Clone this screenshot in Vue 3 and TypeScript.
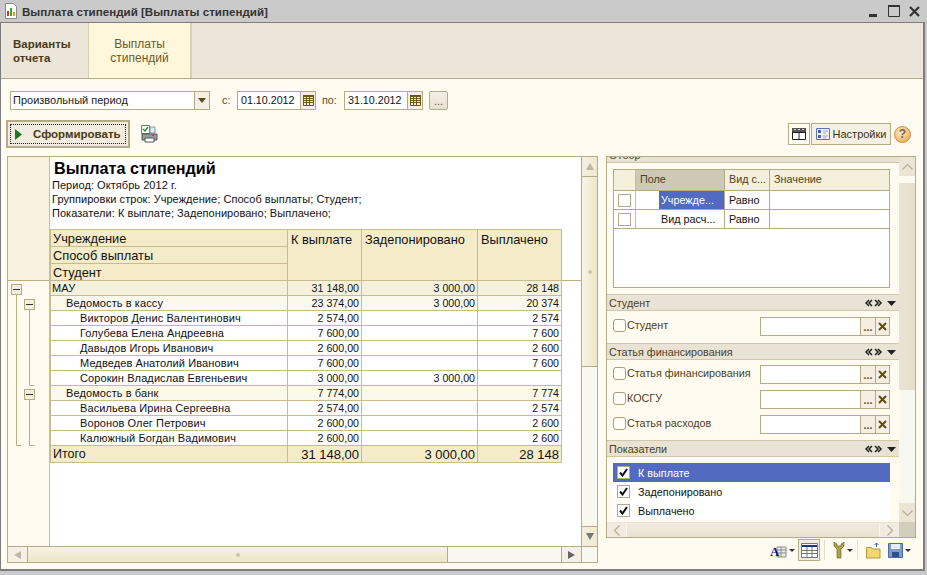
<script setup lang="ts">
interface Row { name: string; a: string; b: string; c: string; level: number }
const rows: Row[] = [
  { name: 'МАУ', a: '31 148,00', b: '3 000,00', c: '28 148', level: 0 },
  { name: 'Ведомость в кассу', a: '23 374,00', b: '3 000,00', c: '20 374', level: 1 },
  { name: 'Викторов Денис Валентинович', a: '2 574,00', b: '', c: '2 574', level: 2 },
  { name: 'Голубева Елена Андреевна', a: '7 600,00', b: '', c: '7 600', level: 2 },
  { name: 'Давыдов Игорь Иванович', a: '2 600,00', b: '', c: '2 600', level: 2 },
  { name: 'Медведев Анатолий Иванович', a: '7 600,00', b: '', c: '7 600', level: 2 },
  { name: 'Сорокин Владислав Евгеньевич', a: '3 000,00', b: '3 000,00', c: '', level: 2 },
  { name: 'Ведомость в банк', a: '7 774,00', b: '', c: '7 774', level: 1 },
  { name: 'Васильева Ирина Сергеевна', a: '2 574,00', b: '', c: '2 574', level: 2 },
  { name: 'Воронов Олег Петрович', a: '2 600,00', b: '', c: '2 600', level: 2 },
  { name: 'Калюжный Богдан Вадимович', a: '2 600,00', b: '', c: '2 600', level: 2 },
]
const filters = [
  { field: 'Учрежде...', kind: 'Равно', selected: true },
  { field: 'Вид расч...', kind: 'Равно', selected: false },
]
const financing = ['Статья финансирования', 'КОСГУ', 'Статья расходов']
const metrics = ['К выплате', 'Задепонировано', 'Выплачено']
</script>

<template>
  <div class="window">
    <svg class="defs" width="0" height="0">
      <symbol id="cal" viewBox="0 0 11 11">
        <path d="M.5 .5h10v10H.5zM.5 3.500h10M.5 5.500h10M.5 7.500h10M3.500 .5v10M6.500 .5v10" fill="none" stroke="#6a5418" />
        <path d="M0 0h11v2H0z" fill="#6a5418" />
      </symbol>
      <symbol id="arrows" viewBox="0 0 32 8">
        <path d="M4 1 1 4l3 3M7 1 4 4l3 3M13 1l3 3-3 3M10 1l3 3-3 3" fill="none" stroke="#222" stroke-width="1.5" />
        <path d="M22 2h9l-4.500 5z" fill="#222" />
      </symbol>
      <symbol id="check" viewBox="0 0 9 9">
        <path d="M1 4.500 3.500 7.500 8 1" fill="none" stroke="#111" stroke-width="2" />
      </symbol>
    </svg>

    <header class="title">
      <svg class="title-icon" width="14" height="16" viewBox="0 0 14 16">
        <path d="M1.500.5h8l3 3v12h-11z" fill="#fff" stroke="#8a8a8a" />
        <path d="M3 8h2v5H3z" fill="#c33" /><path d="M6 5h2v8H6z" fill="#3a3" /><path d="M9 9h2v4H9z" fill="#d8a020" />
      </svg>
      <span class="title-text">Выплата стипендий [Выплаты стипендий]</span>
      <div class="win-controls">
        <svg width="9" height="3" viewBox="0 0 9 3"><path d="M0 0h8v3H0z" fill="#333" /></svg>
        <svg width="12" height="12" viewBox="0 0 12 12"><path d="M.5 1h11v10.500H.5z" fill="none" stroke="#333" /><path d="M0 0h12v2H0z" fill="#333" /></svg>
        <svg width="11" height="11" viewBox="0 0 11 11"><path d="M1 1l9 9M10 1l-9 9" stroke="#333" stroke-width="2.200" /></svg>
      </div>
    </header>

    <div class="frame">
      <nav class="tabs">
        <div class="tab tab-first">Варианты<br />отчета</div>
        <div class="tab tab-active">Выплаты<br />стипендий</div>
      </nav>

      <main class="body">
        <div class="period-row">
          <div class="combo">
            <span class="combo-value">Произвольный период</span>
            <span class="combo-btn"><i class="tri"></i></span>
          </div>
          <span class="lbl lbl-from">с:</span>
          <div class="date">
            <span class="date-value">01.10.2012</span>
            <span class="date-btn"><svg width="11" height="11"><use href="#cal" /></svg></span>
          </div>
          <span class="lbl lbl-to">по:</span>
          <div class="date">
            <span class="date-value">31.10.2012</span>
            <span class="date-btn"><svg width="11" height="11"><use href="#cal" /></svg></span>
          </div>
          <button class="dots-btn">...</button>
        </div>

        <div class="action-row">
          <button class="run-btn">
            <span class="run-inner">
              <svg width="7" height="11" viewBox="0 0 7 11"><path d="M0 0l7 5.500L0 11z" fill="#1c7a20" /></svg>
              <b>Сформировать</b>
            </span>
          </button>
          <svg class="print-icon" width="17" height="18" viewBox="0 0 17 18">
            <path d="M.5.500h8v8h-8z" fill="#fff" stroke="#4a8a50" />
            <path d="M2 4l2 2 3-4" fill="none" stroke="#2a8a30" stroke-width="1.300" />
            <path d="M9 2h5v6H9z" fill="#e4e8f0" stroke="#8a94a8" />
            <path d="M1 9h15v6H1z" fill="#9a9a9a" stroke="#555" />
            <path d="M4 13h9v4H4z" fill="#fff" stroke="#555" />
            <path d="M11 10h2v1h-2z" fill="#d33" />
          </svg>
          <div class="spacer"></div>
          <button class="tool-btn icon-only">
            <svg width="14" height="12" viewBox="0 0 14 12">
              <path d="M.5.500h13v11H.5zM.5 4.500h13M7 4.500v7" fill="#fff" stroke="#222" />
              <path d="M0 0h14v4H0z" fill="#555" /><path d="M2 1h2v1H2zM6 1h2v1H6zM10 1h2v1h-2z" fill="#ddd" />
            </svg>
          </button>
          <button class="tool-btn settings">
            <svg width="14" height="12" viewBox="0 0 14 12">
              <path d="M.5.500h13v11H.5z" fill="#eef1fa" stroke="#5a74b8" />
              <path d="M2 2h3v3H2zM2 7h3v3H2z" fill="#4a64b0" />
              <path d="M7 3h5M7 5h3M7 8h5M7 10h3" stroke="#9aa6c8" />
            </svg>
            Настройки
          </button>
          <span class="help">?</span>
        </div>

        <div class="workspace">
          <section class="report">
            <div class="report-view">
              <div class="gutter">
                <svg class="tree" width="41" height="390" viewBox="0 0 41 390">
                  <path d="M0 0h41v123H0z" fill="#f8f3df" />
                  <path d="M0 123.500h41" stroke="#bcae7e" />
                  <g fill="none" stroke="#bcae7e">
                    <path d="M8.500 137v151.500h5M21.500 152v76.500h5M21.500 242v46.500h5" />
                  </g>
                  <g v-for="y in [127, 142, 232]" :key="y">
                    <rect :x="y === 127 ? 3.5 : 16.5" :y="y + 0.5" width="10" height="10" fill="#f3efdd" stroke="#b5ab85" />
                    <path :d="`M${y === 127 ? 5 : 18} ${y + 5.5}h7`" stroke="#333" />
                  </g>
                </svg>
              </div>
              <div class="sheet">
                <div class="report-head">
                  <h1>Выплата стипендий</h1>
                  <p>Период: Октябрь 2012 г.</p>
                  <p>Группировки строк: Учреждение; Способ выплаты; Студент;</p>
                  <p>Показатели: К выплате; Задепонировано; Выплачено;</p>
                </div>
                <table class="rep-table">
                  <colgroup>
                    <col class="c1" /><col class="c2" /><col class="c3" /><col class="c4" />
                  </colgroup>
                  <tbody>
                    <tr class="hd">
                      <td>Учреждение</td>
                      <td rowspan="3" class="top">К выплате</td>
                      <td rowspan="3" class="top">Задепонировано</td>
                      <td rowspan="3" class="top">Выплачено</td>
                    </tr>
                    <tr class="hd"><td>Способ выплаты</td></tr>
                    <tr class="hd"><td>Студент</td></tr>
                    <tr v-for="r in rows" :key="r.name" class="row" :class="`lvl${r.level}`">
                      <td class="name">{{ r.name }}</td>
                      <td class="num">{{ r.a }}</td>
                      <td class="num">{{ r.b }}</td>
                      <td class="num">{{ r.c }}</td>
                    </tr>
                    <tr class="total">
                      <td>Итого</td>
                      <td class="num">31 148,00</td>
                      <td class="num">3 000,00</td>
                      <td class="num">28 148</td>
                    </tr>
                  </tbody>
                </table>
              </div>
            </div>
            <div class="vbar">
              <span class="sb-btn"><i class="t-up"></i></span>
              <span class="sb-thumb-v"><i class="grip"></i></span>
              <span class="sb-track"></span>
              <span class="sb-btn sb-btn-b"><i class="t-down"></i></span>
            </div>
            <div class="hbar">
              <span class="hb-btn"><i class="t-left"></i></span>
              <span class="hb-thumb"><i class="grip"></i></span>
              <span class="hb-track"></span>
              <span class="hb-btn hb-btn-r"><i class="t-right"></i></span>
            </div>
            <div class="corner"></div>
          </section>

          <aside class="side-col">
            <section class="side">
              <div class="side-main">
                <div class="sec-head clipped"><span>Отбор</span></div>
                <div class="filter-wrap">
                  <div class="ftable">
                    <div class="fhead">
                      <span class="fc0"></span>
                      <span class="fc1 fsel">Поле</span>
                      <span class="fc2">Вид с...</span>
                      <span class="fc3">Значение</span>
                    </div>
                    <div v-for="f in filters" :key="f.field" class="frow">
                      <span class="fc0"><i class="sq"></i></span>
                      <span class="fc1"><em :class="{ picked: f.selected }">{{ f.field }}</em></span>
                      <span class="fc2">{{ f.kind }}</span>
                      <span class="fc3 nob"></span>
                    </div>
                  </div>
                </div>

                <div class="sec-head"><span>Студент</span><svg width="32" height="8"><use href="#arrows" /></svg></div>
                <div class="fields one">
                  <div class="field">
                    <label><i class="rbox"></i>Студент</label>
                    <div class="pick"><span class="pick-in"></span><span class="pick-b dots">...</span><span class="pick-b cross"><svg width="9" height="9" viewBox="0 0 9 9"><path d="M1 1l7 7M8 1L1 8" stroke="#5f4a14" stroke-width="2" /></svg></span></div>
                  </div>
                </div>

                <div class="sec-head"><span>Статья финансирования</span><svg width="32" height="8"><use href="#arrows" /></svg></div>
                <div class="fields">
                  <div v-for="n in financing" :key="n" class="field">
                    <label><i class="rbox"></i>{{ n }}</label>
                    <div class="pick"><span class="pick-in"></span><span class="pick-b dots">...</span><span class="pick-b cross"><svg width="9" height="9" viewBox="0 0 9 9"><path d="M1 1l7 7M8 1L1 8" stroke="#5f4a14" stroke-width="2" /></svg></span></div>
                  </div>
                </div>

                <div class="sec-head"><span>Показатели</span><svg width="32" height="8"><use href="#arrows" /></svg></div>
                <ul class="metrics">
                  <li v-for="(m, i) in metrics" :key="m" :class="{ on: i === 0 }">
                    <i class="cb"><svg width="9" height="9"><use href="#check" /></svg></i>{{ m }}
                  </li>
                </ul>
              </div>
              <div class="side-v">
                <span class="sv-btn"><svg width="11" height="6" viewBox="0 0 11 6"><path d="M.5 5.500l5-5 5 5" fill="none" stroke="#b8b09a" stroke-width="1.300" /></svg></span>
                <span class="sv-gap"></span>
                <span class="sv-thumb"></span>
                <span class="sv-track"></span>
                <span class="sv-btn"><svg width="11" height="6" viewBox="0 0 11 6"><path d="M.5.500l5 5 5-5" fill="none" stroke="#b8b09a" stroke-width="1.300" /></svg></span>
              </div>
              <div class="side-h">
                <span class="sh-btn"><svg width="6" height="11" viewBox="0 0 6 11"><path d="M5.500.500l-5 5 5 5" fill="none" stroke="#b8b09a" stroke-width="1.300" /></svg></span>
                <span class="sh-thumb"></span>
                <span class="sh-btn"><svg width="6" height="11" viewBox="0 0 6 11"><path d="M.5.500l5 5-5 5" fill="none" stroke="#b8b09a" stroke-width="1.300" /></svg></span>
              </div>
              <div class="side-corner"></div>
            </section>

            <div class="bottom-tools">
              <svg width="17" height="17" viewBox="0 0 17 17">
                <path d="M7 5h9v10H7zM7 8h9M7 11h9M11 5v10" fill="#eee" stroke="#888" />
                <text x="0" y="14" class="big-a">A</text>
              </svg>
              <i class="mini-tri"></i>
              <span class="pressed">
                <svg width="17" height="15" viewBox="0 0 17 15">
                  <path d="M.5.500h16v14H.5zM.5 7.500h16M.5 10.500h16M6 4v11M11 4v11" fill="#fff" stroke="#777" />
                  <path d="M1 2h15v2H1z" fill="#23308a" />
                </svg>
              </span>
              <i class="sep"></i>
              <svg width="12" height="17" viewBox="0 0 12 17">
                <path d="M1 0v4l3 3v9h4V7l3-3V0L8 2v2H4V2z" fill="#a9a24a" stroke="#6d6a2a" stroke-width=".7" />
              </svg>
              <i class="mini-tri"></i>
              <i class="sep"></i>
              <svg width="15" height="17" viewBox="0 0 15 17">
                <path d="M.5 5.500h5l1 1.500h7.500v9H.5z" fill="#f2d670" stroke="#b39a40" />
                <path d="M10.500 5V1M8.500 3l2-2 2 2" fill="none" stroke="#3a6ab0" />
              </svg>
              <svg class="floppy" width="15" height="15" viewBox="0 0 15 15">
                <path d="M.5.500h14v14H.5z" fill="#7d9ac8" stroke="#4f6a9a" />
                <path d="M3 1h9v5H3z" fill="#e6ecf6" /><path d="M4 9h7v5H4z" fill="#2f4f88" />
              </svg>
              <i class="mini-tri"></i>
            </div>
          </aside>
        </div>
      </main>
    </div>
  </div>
</template>

<style>
html, body { margin: 0; padding: 0; background: #cacaca; overflow: hidden; }
</style>

<style scoped>
* { box-sizing: border-box; }
.window { width: 927px; height: 575px; background: #cacaca; display: flex; flex-direction: column; font: 10.800px "Liberation Sans", Arial, sans-serif; color: #4b3f1c; overflow: hidden; }
.defs { position: absolute; }
.title { height: 22px; display: flex; align-items: center; padding: 0 0 0 4px; flex: none; }
.title-icon { margin-top: -1px; }
.title-text { margin-left: 4px; font-weight: bold; font-size: 11.600px; color: #333; }
.win-controls { margin-left: auto; width: 60px; margin-right: 7px; display: flex; align-items: flex-end; justify-content: space-between; padding: 0 0 0 9px; height: 12px; }
.frame { width: 925px; height: 549px; flex: none; border: solid #7d7d7d; border-width: 1px 2px 2px 1px; background: #fffbf0; display: flex; flex-direction: column; }
.tabs { height: 56px; background: #ebe5da; border-bottom: 1px solid #b5ab85; display: flex; flex: none; }
.tab { height: 55px; display: flex; align-items: center; line-height: 14px; }
.tab-first { width: 88px; border-right: 1px solid #d8d0b0; padding-left: 12px; font-weight: bold; font-size: 11.500px; color: #4a3a14; }
.tab-active { width: 103px; background: #fff7dc; border-right: 2px solid #d8d0b0; justify-content: center; text-align: center; color: #6a5a2c; font-size: 12px; }
.body { flex: 1; padding: 12px 0 0 6px; min-height: 0; display: flex; flex-direction: column; }

.period-row { height: 19px; display: flex; align-items: stretch; margin-left: 3px; flex: none; }
.combo { width: 200px; border: 1px solid #b5ab85; background: #fff; display: flex; color: #222; }
.combo-value { flex: 1; padding-left: 2px; line-height: 17px; font-size: 11px; }
.combo-btn { width: 15px; background: #f4efe2; border-left: 1px solid #b5ab85; display: flex; align-items: center; justify-content: center; }
.tri { border: 4px solid transparent; border-top: 5px solid #5f4a14; border-bottom: 0; }
.lbl { line-height: 19px; color: #5a4d25; }
.lbl-from { margin-left: 12px; width: 15px; }
.lbl-to { margin-left: 6px; width: 22px; }
.date { width: 79px; border: 1px solid #b5ab85; background: #fff; display: flex; }
.date-value { flex: 1; padding-left: 3px; font-size: 10.700px; line-height: 17px; color: #111; }
.date-btn { width: 15px; background: #f4efe2; border-left: 1px solid #b5ab85; display: flex; align-items: center; justify-content: center; }
.dots-btn { width: 19px; margin-left: 6px; border: 1px solid #b5ab85; background: linear-gradient(#f4f0e6, #e6e0d0); border-radius: 2px; padding: 0; font: 11px "Liberation Sans", sans-serif; color: #7a4a2a; line-height: 14px; }

.action-row { height: 28px; margin-top: 10px; margin-left: -1px; display: flex; align-items: center; flex: none; }
.run-btn { width: 124px; height: 28px; border: 2px solid #b5ab85; background: #f1ecdf; padding: 2px; font: 11px "Liberation Sans", sans-serif; color: #4a3a14; }
.run-inner { display: flex; align-items: center; height: 100%; border: 1px dotted #222; padding-left: 4px; }
.run-inner b { margin-left: 11px; font-size: 11.500px; }
.print-icon { margin-left: 11px; }
.spacer { flex: 1; }
.tool-btn { height: 22px; border: 1px solid #b5ab85; background: #f5f0e4; padding: 0; display: flex; align-items: center; justify-content: center; font: 11px "Liberation Sans", sans-serif; color: #3a3420; }
.icon-only { width: 22px; background: #fffbf0; }
.settings { width: 80px; margin-left: 1px; gap: 3px; }
.help { width: 17px; height: 17px; margin: 0 12px 0 3px; border-radius: 50%; background: radial-gradient(circle at 40% 35%, #fff0d0, #f0b060 75%); border: 1px solid #c89040; display: flex; align-items: center; justify-content: center; font: bold 12px "Liberation Sans", sans-serif; color: #7a6040; }

.workspace { margin-top: 8px; display: flex; flex: none; height: 407px; align-items: flex-start; }
.report { width: 591px; height: 407px; border: 1px solid #b5ab85; display: grid; grid-template-columns: 573px 16px; grid-template-rows: 389px 16px; background: #fff; }
.report-view { display: flex; min-width: 0; min-height: 0; overflow: hidden; }
.gutter { width: 42px; border-right: 1px solid #c8bd93; background: #fffbf0; flex: none; }
.tree { display: block; }
.sheet { flex: 1; min-width: 0; color: #111; background: linear-gradient(#bcae7e, #bcae7e) 0 123px / 100% 1px no-repeat; }
.report-head { height: 72px; padding-left: 2px; }
.report-head h1 { margin: 0 0 0 2px; padding-top: 1px; height: 21px; font-size: 16.200px; line-height: 20px; font-weight: bold; color: #000; }
.report-head p { margin: 0; height: 14px; line-height: 14px; font-size: 11px; letter-spacing: .05px; }
.rep-table { border-collapse: collapse; table-layout: fixed; width: 512px; }
.c1 { width: 237px; } .c2 { width: 74px; } .c3 { width: 116px; } .c4 { width: 84px; }
.rep-table td { border: 1px solid #c8bb8c; padding: 0 2px; overflow: hidden; white-space: nowrap; }
.hd td { height: 17px; background: #f4ecc8; font-size: 12.800px; line-height: 15px; padding: 1px 0 0 2px; }
.hd td.top { vertical-align: top; padding-top: 2px; padding-left: 3px; }
.row td { height: 15px; font-size: 10.670px; line-height: 13px; }
.row td.name { font-size: 11px; letter-spacing: .1px; padding-left: 1px; }
.row td.num, .total td.num { text-align: right; padding-right: 2px; }
.lvl0 td { background: #f6f1dc; }
.lvl1 td { background: #fbf8ec; }
.row.lvl1 td.name { padding-left: 15px; }
.row.lvl2 td.name { padding-left: 29px; }
.total td { height: 17px; background: #f4ecc8; font-size: 12.500px; line-height: 15px; padding-left: 2px; }
.total td.num { font-size: 13px; }

.vbar { display: flex; flex-direction: column; border-left: 1px solid #b5ab85; background: #f8f7f0; }
.sb-btn { height: 20px; flex: none; background: linear-gradient(90deg, #f4f0de, #efe9cf); border-bottom: 1px solid #b5ab85; display: flex; align-items: center; justify-content: center; }
.sb-btn-b { border-bottom: 0; border-top: 1px solid #b5ab85; }
.sb-thumb-v { height: 190px; flex: none; background: linear-gradient(90deg, #f7f4e4, #ede7c8); border-bottom: 1px solid #b5ab85; display: flex; align-items: center; justify-content: center; }
.sb-track { flex: 1; }
.grip { width: 4px; height: 4px; border-radius: 50%; background: #c8c4b0; display: block; }
.t-up { border: 4px solid transparent; border-bottom: 7px solid #bbb8a8; border-top: 0; }
.t-down { border: 4px solid transparent; border-top: 7px solid #777; border-bottom: 0; }
.t-left { border: 4px solid transparent; border-right: 7px solid #bbb8a8; border-left: 0; }
.t-right { border: 4px solid transparent; border-left: 7px solid #666; border-right: 0; }
.hbar { display: flex; border-top: 1px solid #b5ab85; background: #f8f7f0; }
.hb-btn { width: 20px; flex: none; display: flex; align-items: center; justify-content: center; background: #f4f1e4; border-right: 1px solid #b5ab85; }
.hb-btn-r { border-right: 0; border-left: 1px solid #b5ab85; }
.hb-thumb { width: 420px; flex: none; background: linear-gradient(#f6f3e3, #ece6c8); border-right: 1px solid #b5ab85; display: flex; align-items: center; justify-content: center; }
.hb-track { flex: 1; }
.corner { border: solid #b5ab85; border-width: 1px 0 0 1px; background: #f8f7f0; }

.side-col { width: 310px; margin-left: 8px; }
.side { width: 310px; height: 382px; border: 1px solid #b5ab85; display: grid; grid-template-columns: 292px 16px; grid-template-rows: 365px 15px; background: #fffbf0; }
.side-main { overflow: hidden; }
.sec-head { height: 15px; background: #e9e3d6; border: solid #cfc7a6; border-width: 1px 0; display: flex; align-items: center; justify-content: space-between; padding: 0 2px 0 2px; color: #4b3f1c; box-sizing: content-box; }
.clipped { height: 5px; overflow: hidden; align-items: flex-end; border-top: 0; }
.clipped span { line-height: 14px; height: 14px; flex: none; }
.filter-wrap { padding: 6px 9px 0 6px; height: 131px; }
.ftable { height: 119px; border: 1px solid #b5ab85; background: #fff; color: #111; }
.fhead { height: 21px; display: flex; background: #f4f0dc; border-bottom: 1px solid #b5ab85; color: #4b3f1c; line-height: 19px; }
.frow { height: 19px; display: flex; border-bottom: 1px solid #b5ab85; line-height: 18px; }
.fc0 { width: 22px; border-right: 1px solid #c8bd93; display: flex; align-items: center; justify-content: center; }
.fc1 { width: 89px; border-right: 1px solid #b5ab85; padding-left: 4px; flex: none; }
.fsel { background: #cdc9b4; }
.fc2 { width: 45px; border-right: 1px solid #b5ab85; padding-left: 4px; flex: none; white-space: nowrap; overflow: hidden; }
.fc3 { flex: 1; padding-left: 4px; }
.fc1 em { font-style: normal; display: block; height: 18px; }
.fc1 em.picked { background: #526bc0; color: #fff; }
.frow .fc1 { padding-left: 0; }
.frow .fc1 em { margin-left: 23px; padding-left: 2px; }
.sq { width: 13px; height: 13px; border: 1px solid #b5ab85; background: #fff; display: block; }
.fields { padding: 5px 9px 6px 6px; display: flex; flex-direction: column; gap: 6px; }
.fields.one { padding: 6px 9px 7px 6px; }
.field { height: 19px; display: flex; justify-content: space-between; }
.field label { display: flex; align-items: center; height: 16px; line-height: 16px; color: #4b3f1c; }
.rbox { width: 13px; height: 13px; border: 1px solid #a89e78; border-radius: 3px; background: #fffdf5; margin-right: 1px; flex: none; }
.pick { width: 130px; height: 19px; border: 1px solid #b5ab85; display: flex; background: #f4efe2; }
.pick-in { flex: 1; background: #fff; }
.pick-b { width: 15px; border-left: 1px solid #b5ab85; display: flex; align-items: center; justify-content: center; }
.dots { align-items: flex-end; font-weight: bold; color: #5f4a14; line-height: 15px; }
.cross { width: 14px; }
.metrics { list-style: none; margin: 0; padding: 6px 9px 0 6px; color: #111; }
.metrics li { height: 19px; display: flex; align-items: center; padding-left: 4px; line-height: 18px; background: #fff; }
.metrics li.on { background: #526bc0; color: #fff; }
.cb { width: 13px; height: 13px; background: #fff; border: 1px solid #b5ab85; margin-right: 8px; display: flex; align-items: center; justify-content: center; }
.side-v { display: flex; flex-direction: column; background: #f8f7f0; }
.sv-btn { height: 19px; flex: none; background: #ebe5d4; display: flex; align-items: center; justify-content: center; }
.sv-gap { height: 7px; flex: none; background: #fffbf0; }
.sv-thumb { height: 207px; flex: none; background: linear-gradient(90deg, #e9e3d6, #e5dfca); }
.sv-track { flex: 1; }
.side-h { grid-column: 1; display: flex; background: #f3efe2; border-top: 1px solid #ece6cc; }
.sh-btn { width: 19px; flex: none; display: flex; align-items: center; justify-content: center; background: #f0ecdf; }
.sh-thumb { flex: 1; background: linear-gradient(#f0ecdf, #e8e2d2); border: solid #f8f5ea; border-width: 0 1px; }
.side-corner { background: #d2cebc; }

.bottom-tools { height: 24px; display: flex; align-items: center; justify-content: flex-end; padding-right: 5px; }
.pressed { width: 22px; height: 22px; margin-left: 3px; border: 1px solid #b5ab85; background: #f1ecdf; display: flex; align-items: center; justify-content: center; }
.mini-tri { border: 3px solid transparent; border-top: 3px solid #333; border-bottom: 0; margin-left: 2px; }
.sep { width: 1px; height: 20px; background: #e6e0c8; margin: 0 8px 0 4px; }
.floppy { margin-left: 7px; }
.big-a { font: bold 13px "Liberation Serif", serif; fill: #12128c; }
</style>
